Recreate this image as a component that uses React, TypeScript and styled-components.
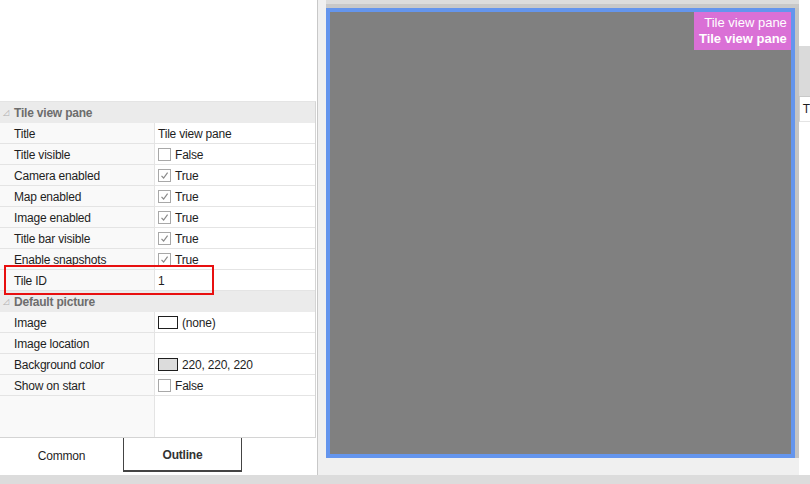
import { ReactElement } from 'react';
import styled, { createGlobalStyle } from 'styled-components';

const GlobalStyle = createGlobalStyle`
  html, body {
    margin: 0;
    padding: 0;
    overflow: hidden;
  }
  body {
    font-family: 'Liberation Sans', Arial, sans-serif;
    font-size: 12px;
    letter-spacing: -0.2px;
    color: #1e1e1e;
  }
`;

const Screen = styled.div`
  width: 810px;
  height: 484px;
  display: flex;
  flex-direction: column;
  background: #f0f0f0;
`;

const Main = styled.div`
  height: 475px;
  display: flex;
`;

const BottomBar = styled.div`
  flex: 1;
  background: #dcdcdc;
`;

const LeftPanel = styled.div`
  width: 318px;
  display: flex;
  flex-direction: column;
  background: #ffffff;
  border-right: 1px solid #c8c8c8;
`;

const TopSpace = styled.div`
  height: 101px;
  background: #ffffff;
`;

const Grid = styled.div`
  position: relative;
  flex: 1;
  display: flex;
  flex-direction: column;
  margin-right: 1px;
  border-top: 1px solid #e4e4e4;
  border-right: 1px solid #d4d4d4;
  border-bottom: 1px solid #d4d4d4;
  background: #ffffff;
`;

const Category = styled.div`
  height: 21px;
  display: flex;
  align-items: center;
  background: #ebebeb;
  font-weight: bold;
  color: #6d6d6d;
`;

const Glyph = styled.span`
  width: 14px;
  padding-left: 3px;
  box-sizing: border-box;
  font-size: 8px;
  font-weight: normal;
  color: #b0b0b0;
`;

const Row = styled.div`
  height: 20px;
  display: grid;
  grid-template-columns: 155px 1fr;
  border-bottom: 1px solid #e4e4e4;
`;

const Label = styled.div`
  display: flex;
  align-items: center;
  padding: 1px 0 0 14px;
  border-right: 1px solid #e4e4e4;
  background: #f9f9f9;
`;

const Value = styled.div`
  display: flex;
  align-items: center;
  gap: 4px;
  padding: 1px 0 0 3px;
  background: #ffffff;
`;

const FillRow = styled.div`
  flex: 1;
  display: grid;
  grid-template-columns: 155px 1fr;
`;

const FillLabel = styled.div`
  border-right: 1px solid #e4e4e4;
  background: #f9f9f9;
`;

const Check = styled.span`
  width: 11px;
  height: 11px;
  border: 1px solid #a8a8a8;
  background: #ffffff;
  display: inline-flex;
  align-items: center;
  justify-content: center;
`;

const Swatch = styled.span<{ $fill: string }>`
  width: 18px;
  height: 11px;
  border: 1px solid #1e1e1e;
  background: ${(p) => p.$fill};
`;

const Highlight = styled.div`
  position: absolute;
  left: 4px;
  top: 163px;
  width: 206px;
  height: 26px;
  border: 2px solid #e81010;
  pointer-events: none;
`;

const Tabs = styled.div`
  height: 37px;
  display: flex;
  align-items: flex-start;
  background: #ffffff;
`;

const Tab = styled.div<{ $active?: boolean }>`
  width: ${(p) => (p.$active ? '117px' : '123px')};
  height: ${(p) => (p.$active ? '30px' : '32px')};
  padding-top: 2px;
  box-sizing: content-box;
  display: flex;
  align-items: center;
  justify-content: center;
  font-weight: ${(p) => (p.$active ? 'bold' : 'normal')};
  color: ${(p) => (p.$active ? '#333333' : '#1e1e1e')};
  border: ${(p) => (p.$active ? '1px solid #444444' : 'none')};
  border-top: none;
  border-bottom-width: ${(p) => (p.$active ? '2px' : '0')};
`;

const Splitter = styled.div`
  width: 8px;
  background: #f0f0f0;
`;

const Workspace = styled.div`
  width: 473px;
  display: flex;
  flex-direction: column;
`;

const WorkspaceTop = styled.div`
  height: 4px;
  background: #dcdcdc;
  border-bottom: 4px solid #c8c8c8;
`;

const PaneRow = styled.div`
  display: flex;
`;

const TilePane = styled.div`
  position: relative;
  width: 461px;
  height: 442px;
  border: 4px solid #6495ed;
  background: #808080;
`;

const PaneShadow = styled.div`
  width: 4px;
  background: #c4c4c4;
`;

const TitleBadge = styled.div`
  position: absolute;
  top: 0;
  right: 0;
  padding: 3px 4px 3px 5px;
  background: #da70d6;
  color: #ffffff;
  font-family: 'Liberation Sans', Arial, sans-serif;
  font-size: 13px;
  letter-spacing: 0;
  line-height: 16px;
  text-align: right;
`;

const BadgeBold = styled.div`
  font-weight: bold;
`;

const SideStrip = styled.div`
  flex: 1;
  display: flex;
  flex-direction: column;
  background: #ffffff;
`;

const StripBand = styled.div`
  height: 50px;
  margin-top: 46px;
  background: #dadada;
  border-bottom: 1px solid #c8c8c8;
`;

const StripCell = styled.div`
  height: 24px;
  padding-left: 3px;
  display: flex;
  align-items: center;
  border-left: 1px solid #d0d0d0;
  border-bottom: 1px solid #e4e4e4;
  overflow: hidden;
`;

const CheckMark = (): ReactElement => (
  <svg width="9" height="9" viewBox="0 0 9 9">
    <path d="M1.5 4.8 L3.6 7 L7.6 1.6" fill="none" stroke="#8a8a8a" strokeWidth="1.2" />
  </svg>
);

type Prop = { label: string; value?: string; check?: boolean; swatch?: string };

const tileProps: Prop[] = [
  { label: 'Title', value: 'Tile view pane' },
  { label: 'Title visible', value: 'False', check: false },
  { label: 'Camera enabled', value: 'True', check: true },
  { label: 'Map enabled', value: 'True', check: true },
  { label: 'Image enabled', value: 'True', check: true },
  { label: 'Title bar visible', value: 'True', check: true },
  { label: 'Enable snapshots', value: 'True', check: true },
  { label: 'Tile ID', value: '1' },
];

const pictureProps: Prop[] = [
  { label: 'Image', value: '(none)', swatch: '#ffffff' },
  { label: 'Image location' },
  { label: 'Background color', value: '220, 220, 220', swatch: '#dcdcdc' },
  { label: 'Show on start', value: 'False', check: false },
];

const PropRow = ({ label, value, check, swatch }: Prop): ReactElement => (
  <Row>
    <Label>{label}</Label>
    <Value>
      {check !== undefined && <Check>{check && <CheckMark />}</Check>}
      {swatch && <Swatch $fill={swatch} />}
      {value}
    </Value>
  </Row>
);

const App = (): ReactElement => {
  return (
    <Screen>
      <GlobalStyle />
      <Main>
        <LeftPanel>
          <TopSpace />
          <Grid>
            <Category>
              <Glyph>◿</Glyph>Tile view pane
            </Category>
            {tileProps.map((p) => (
              <PropRow key={p.label} {...p} />
            ))}
            <Category>
              <Glyph>◿</Glyph>Default picture
            </Category>
            {pictureProps.map((p) => (
              <PropRow key={p.label} {...p} />
            ))}
            <FillRow>
              <FillLabel />
              <div />
            </FillRow>
            <Highlight />
          </Grid>
          <Tabs>
            <Tab>Common</Tab>
            <Tab $active>Outline</Tab>
          </Tabs>
        </LeftPanel>
        <Splitter />
        <Workspace>
          <WorkspaceTop />
          <PaneRow>
            <TilePane>
              <TitleBadge>
                <div>Tile view pane</div>
                <BadgeBold>Tile view pane</BadgeBold>
              </TitleBadge>
            </TilePane>
            <PaneShadow />
          </PaneRow>
        </Workspace>
        <SideStrip>
          <StripBand />
          <StripCell>T</StripCell>
        </SideStrip>
      </Main>
      <BottomBar />
    </Screen>
  );
};

export default App;
